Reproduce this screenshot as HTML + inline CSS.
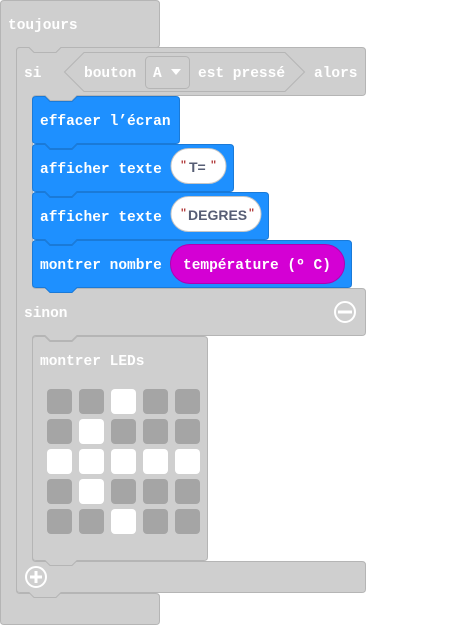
<!DOCTYPE html>
<html><head><meta charset="utf-8"><style>
html,body{margin:0;padding:0;background:#fff;width:456px;height:625px;overflow:hidden}
svg{display:block}
.t{font-family:"Liberation Mono",monospace;font-weight:bold;font-size:14.5px;fill:#fff}
.s{font-family:"Liberation Sans",sans-serif;font-weight:bold;font-size:14px;fill:#575e75}
.q{font-family:"Liberation Sans",sans-serif;font-size:14px;fill:#a31515}
</style></head><body>
<svg width="456" height="625" viewBox="0 0 456 625">
<path d="M0.5,4 Q0.5,0.5 4,0.5 H156 Q159.5,0.5 159.5,4 V44 Q159.5,47.5 156,47.5 H61 l-5,5 H34 l-5,-5 H20 Q16.5,47.5 16.5,51 V590 Q16.5,593.5 20,593.5 H156 Q159.5,593.5 159.5,597 V621 Q159.5,624.5 156,624.5 H4 Q0.5,624.5 0.5,621 Z" fill="#cfcfcf" stroke="#b5b5b5"/>
<text class="t" x="8" y="29">toujours</text>
<path d="M16.5,51 Q16.5,47.5 20,47.5 H29 l5,5 H56 l5,-5 H362 Q365.5,47.5 365.5,51 V92 Q365.5,95.5 362,95.5 H77 l-5,5 H50 l-5,-5 H36 Q32.5,95.5 32.5,99 V285 Q32.5,288.5 36,288.5 H362 Q365.5,288.5 365.5,292 V332 Q365.5,335.5 362,335.5 H77 l-5,5 H50 l-5,-5 H36 Q32.5,335.5 32.5,339 V558 Q32.5,561.5 36,561.5 H362 Q365.5,561.5 365.5,565 V589 Q365.5,592.5 362,592.5 H61 l-5,5 H34 l-5,-5 H20 Q16.5,592.5 16.5,589 Z" fill="#cfcfcf" stroke="#b5b5b5"/>
<text class="t" x="24" y="77">si</text>
<polygon points="64.5,72 84,52.5 285,52.5 304.5,72 285,91.5 84,91.5" fill="#cfcfcf" stroke="#b5b5b5"/>
<text class="t" x="84" y="77">bouton</text>
<rect x="145.5" y="56.5" width="44" height="32" rx="4" fill="#cfcfcf" stroke="#b5b5b5"/>
<text class="t" x="153" y="77">A</text>
<polygon points="171,69 181,69 176,75" fill="#fff"/>
<text class="t" x="198" y="77">est pressé</text>
<text class="t" x="314" y="77">alors</text>
<text class="t" x="24" y="317">sinon</text>
<circle cx="345" cy="312" r="10" fill="none" stroke="#fff" stroke-width="2"/>
<rect x="338" y="310.5" width="14" height="3" fill="#fff"/>
<circle cx="36" cy="577" r="10" fill="none" stroke="#fff" stroke-width="2"/>
<rect x="30" y="575.5" width="12" height="3" fill="#fff"/>
<rect x="34.5" y="571" width="3" height="12" fill="#fff"/>
<g fill="#1e90ff" stroke="#1a7ad8">
<path d="M32.5,100 Q32.5,96.5 36,96.5 H45 l5,5 H72 l5,-5 H176 Q179.5,96.5 179.5,100 V140 Q179.5,143.5 176,143.5 H77 l-5,5 H50 l-5,-5 H36 Q32.5,143.5 32.5,140 Z"/>
<path d="M32.5,148 Q32.5,144.5 36,144.5 H45 l5,5 H72 l5,-5 H230 Q233.5,144.5 233.5,148 V188 Q233.5,191.5 230,191.5 H77 l-5,5 H50 l-5,-5 H36 Q32.5,191.5 32.5,188 Z"/>
<path d="M32.5,196 Q32.5,192.5 36,192.5 H45 l5,5 H72 l5,-5 H265 Q268.5,192.5 268.5,196 V236 Q268.5,239.5 265,239.5 H77 l-5,5 H50 l-5,-5 H36 Q32.5,239.5 32.5,236 Z"/>
<path d="M32.5,244 Q32.5,240.5 36,240.5 H45 l5,5 H72 l5,-5 H348 Q351.5,240.5 351.5,244 V284 Q351.5,287.5 348,287.5 H77 l-5,5 H50 l-5,-5 H36 Q32.5,287.5 32.5,284 Z"/>
</g>
<text class="t" x="40" y="125">effacer l’écran</text>
<text class="t" x="40" y="173">afficher texte</text>
<text class="t" x="40" y="221">afficher texte</text>
<text class="t" x="40" y="269">montrer nombre</text>
<rect x="171" y="148.5" width="55" height="35" rx="17.5" fill="#fff" stroke="#c6c6c6"/>
<text class="q" x="181" y="170">"</text><text class="s" x="189" y="172">T=</text><text class="q" x="211" y="170">"</text>
<rect x="171" y="196.5" width="90" height="35" rx="17.5" fill="#fff" stroke="#c6c6c6"/>
<text class="q" x="181" y="218">"</text><text class="s" x="188" y="220">DEGRES</text><text class="q" x="249" y="218">"</text>
<rect x="170.5" y="244.5" width="174" height="39" rx="19.5" fill="#d400d4" stroke="#b000b0"/>
<text class="t" x="183" y="269">température (º C)</text>
<path d="M32.5,340 Q32.5,336.5 36,336.5 H45 l5,5 H72 l5,-5 H204 Q207.5,336.5 207.5,340 V557 Q207.5,560.5 204,560.5 H77 l-5,5 H50 l-5,-5 H36 Q32.5,560.5 32.5,557 Z" fill="#cfcfcf" stroke="#b5b5b5"/>
<text class="t" x="40" y="365">montrer LEDs</text>
<g>
<rect x="47" y="389" width="25" height="25" rx="4" fill="#a5a5a5"/>
<rect x="79" y="389" width="25" height="25" rx="4" fill="#a5a5a5"/>
<rect x="111" y="389" width="25" height="25" rx="4" fill="#fff"/>
<rect x="143" y="389" width="25" height="25" rx="4" fill="#a5a5a5"/>
<rect x="175" y="389" width="25" height="25" rx="4" fill="#a5a5a5"/>
<rect x="47" y="419" width="25" height="25" rx="4" fill="#a5a5a5"/>
<rect x="79" y="419" width="25" height="25" rx="4" fill="#fff"/>
<rect x="111" y="419" width="25" height="25" rx="4" fill="#a5a5a5"/>
<rect x="143" y="419" width="25" height="25" rx="4" fill="#a5a5a5"/>
<rect x="175" y="419" width="25" height="25" rx="4" fill="#a5a5a5"/>
<rect x="47" y="449" width="25" height="25" rx="4" fill="#fff"/>
<rect x="79" y="449" width="25" height="25" rx="4" fill="#fff"/>
<rect x="111" y="449" width="25" height="25" rx="4" fill="#fff"/>
<rect x="143" y="449" width="25" height="25" rx="4" fill="#fff"/>
<rect x="175" y="449" width="25" height="25" rx="4" fill="#fff"/>
<rect x="47" y="479" width="25" height="25" rx="4" fill="#a5a5a5"/>
<rect x="79" y="479" width="25" height="25" rx="4" fill="#fff"/>
<rect x="111" y="479" width="25" height="25" rx="4" fill="#a5a5a5"/>
<rect x="143" y="479" width="25" height="25" rx="4" fill="#a5a5a5"/>
<rect x="175" y="479" width="25" height="25" rx="4" fill="#a5a5a5"/>
<rect x="47" y="509" width="25" height="25" rx="4" fill="#a5a5a5"/>
<rect x="79" y="509" width="25" height="25" rx="4" fill="#a5a5a5"/>
<rect x="111" y="509" width="25" height="25" rx="4" fill="#fff"/>
<rect x="143" y="509" width="25" height="25" rx="4" fill="#a5a5a5"/>
<rect x="175" y="509" width="25" height="25" rx="4" fill="#a5a5a5"/>
</g>
</svg>
</body></html>
